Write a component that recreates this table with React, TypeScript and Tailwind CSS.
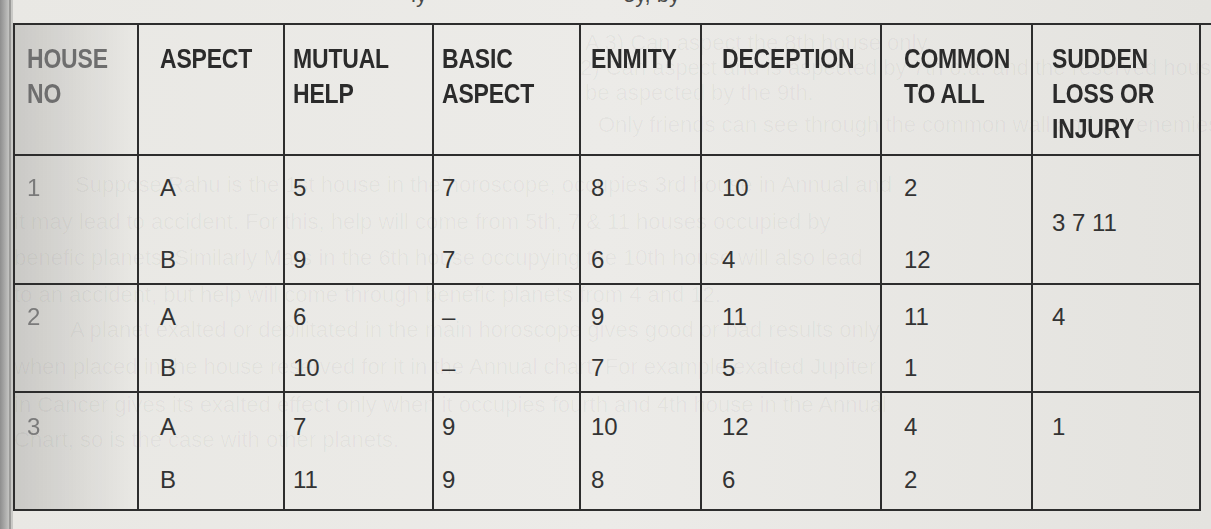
const GRID = 'grid grid-cols-[124px_146px_149px_147px_121px_180px_151px_168px]';
const PADS = ['pl-[12px]', 'pl-[21px]', 'pl-[8px]', 'pl-[8px]', 'pl-[10px]', 'pl-[20px]', 'pl-[22px]', 'pl-[19px]'];
const LINE = 'border-r-2 border-b-2 border-[#2d2d2d]';

const headers = [
  ['HOUSE', 'NO'],
  ['ASPECT'],
  ['MUTUAL', 'HELP'],
  ['BASIC', 'ASPECT'],
  ['ENMITY'],
  ['DECEPTION'],
  ['COMMON', 'TO ALL'],
  ['SUDDEN', 'LOSS OR', 'INJURY'],
];

type Row = {
  house: string;
  cells: string[][];
  last: string;
  h: string;
  pt: string;
  gap: string;
  lastPt: string;
};

const rows: Row[] = [
  {
    house: '1',
    cells: [['A', 'B'], ['5', '9'], ['7', '7'], ['8', '6'], ['10', '4'], ['2', '12']],
    last: '3 7 11',
    h: 'h-[129px]',
    pt: 'pt-[20px]',
    gap: 'gap-[48px]',
    lastPt: 'pt-[55px]',
  },
  {
    house: '2',
    cells: [['A', 'B'], ['6', '10'], ['–', '–'], ['9', '7'], ['11', '5'], ['11', '1']],
    last: '4',
    h: 'h-[108px]',
    pt: 'pt-[20px]',
    gap: 'gap-[27px]',
    lastPt: 'pt-[20px]',
  },
  {
    house: '3',
    cells: [['A', 'B'], ['7', '11'], ['9', '9'], ['10', '8'], ['12', '6'], ['4', '2']],
    last: '1',
    h: 'h-[118px]',
    pt: 'pt-[22px]',
    gap: 'gap-[29px]',
    lastPt: 'pt-[22px]',
  },
];

// faint print showing through from the next sheet
const BleedThrough = () => (
  <div className="[grid-area:1/1] flex flex-col whitespace-nowrap font-['Liberation_Sans',Arial,sans-serif] text-[22px] leading-[22px] text-black/[0.035]">
    <div className="h-[8px] overflow-hidden text-[#4a4a4a]">
      <div className="-mt-[16px] pl-[398px]">
        <span>ly</span>
        <span className="ml-[196px]">ey, by</span>
      </div>
    </div>
    <div className="mt-[24px] pl-[572px]">A 3) Can aspect the 8th house only.</div>
    <div className="mt-[3px] pl-[567px]">2) Can aspect and is aspected by 7th o.a. and the reserved house for it is the</div>
    <div className="mt-[3px] pl-[572px]">be aspected by the 9th.</div>
    <div className="mt-[10px] pl-[585px]">Only friends can see through the common wall and not enemies.</div>
    <div className="mt-[38px] pl-[62px]">Suppose Rahu is the 1st house in the horoscope, occupies 3rd house in Annual and</div>
    <div className="mt-[15px] pl-[1px]">it may lead to accident. For this, help will come from 5th, 7 &amp; 11 houses occupied by</div>
    <div className="mt-[14px] pl-[1px]">benefic planets. Similarly Mars in the 6th house occupying the 10th house will also lead</div>
    <div className="mt-[15px] pl-[1px]">to an accident, but help will come through benefic planets from 4 and 12.</div>
    <div className="mt-[13px] pl-[57px]">A planet exalted or debilitated in the main horoscope gives good or bad results only</div>
    <div className="mt-[15px] pl-[1px]">when placed in the house reserved for it in the Annual chart. For example exalted Jupiter</div>
    <div className="mt-[16px] pl-[1px]">in Cancer gives its exalted effect only when it occupies fourth and 4th house in the Annual</div>
    <div className="mt-[13px] pl-[1px]">Chart, so is the case with other planets.</div>
  </div>
);

const HouseTable = () => (
  <div className="[grid-area:1/1] mt-[23px] self-start border-l-2 border-t-2 border-[#2d2d2d]">
    {/* Header */}
    <div className={`${GRID} h-[131px] font-['Liberation_Sans',Arial,sans-serif] text-[28px] leading-[35px] font-bold text-[#2b2b2b]`}>
      {headers.map((lines, i) => (
        <div
          key={i}
          className={`${LINE} ${PADS[i]} pt-[16px] flex flex-col items-start ${
            i === 0 ? 'bg-linear-to-r from-black/[0.13] to-transparent text-[#6e6e6e] blur-[0.4px]' : ''
          }`}
        >
          {lines.map((l) => (
            <span key={l} className="inline-block whitespace-nowrap origin-left scale-x-[0.82] tracking-[-0.2px]">
              {l}
            </span>
          ))}
        </div>
      ))}
    </div>

    {/* Body */}
    {rows.map((r) => (
      <div
        key={r.house}
        className={`${GRID} ${r.h} font-['Liberation_Sans',Arial,sans-serif] text-[24px] leading-[24px] text-[#333]`}
      >
        <div className={`${LINE} ${PADS[0]} ${r.pt} bg-linear-to-r from-black/[0.13] to-transparent text-[#7a7a7a] blur-[0.4px]`}>
          {r.house}
        </div>
        {r.cells.map((c, i) => (
          <div key={i} className={`${LINE} ${PADS[i + 1]} ${r.pt} ${r.gap} flex flex-col`}>
            <span>{c[0]}</span>
            <span>{c[1]}</span>
          </div>
        ))}
        <div className={`${LINE} ${PADS[7]} ${r.lastPt}`}>{r.last}</div>
      </div>
    ))}
  </div>
);

export default function App() {
  return (
    <div className="flex w-[1211px] h-[529px] overflow-hidden bg-linear-to-r from-[#e9e8e4] via-[#ecebe8] to-[#e4e3df]">
      {/* page edge near the binding */}
      <div className="w-[13px] shrink-0 flex">
        <div className="w-[9px] bg-linear-to-r from-[#8e8e8e] to-[#c4c4c2]" />
        <div className="w-[2px] bg-[#9a9a98]" />
        <div className="w-[2px] bg-[#c9c9c6]" />
      </div>

      <div className="grid flex-1">
        <BleedThrough />
        <HouseTable />
      </div>
    </div>
  );
}
